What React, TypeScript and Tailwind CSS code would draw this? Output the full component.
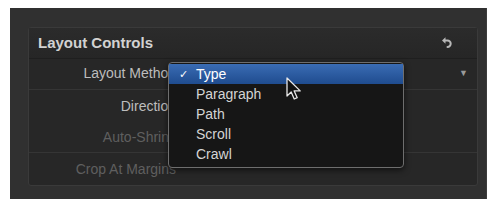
import React from 'react';

const menuItems = ['Type', 'Paragraph', 'Path', 'Scroll', 'Crawl'];

const rows = [
  { label: 'Layout Method', dim: false, line: true, arrow: true },
  { label: 'Direction', dim: false, line: false, arrow: false },
  { label: 'Auto-Shrink', dim: true, line: true, arrow: false },
  { label: 'Crop At Margins', dim: true, line: false, arrow: false },
];

const UndoIcon = () => (
  <svg width="12" height="14" viewBox="0 0 12 14" fill="none">
    <path d="M4 4.5h2.5a3.2 3.2 0 0 1 0 6.4" stroke="#b8b8b8" strokeWidth="2" strokeLinecap="round" />
    <path d="M1 4.5l3.5-3.2v6.4z" fill="#b8b8b8" />
  </svg>
);

const Cursor = () => (
  <svg width="16" height="24" viewBox="0 0 16 24">
    <path d="M1 1v18l4.2-4 3 7 3-1.3-3-6.8h6z" fill="#111" stroke="#e8e8e8" strokeWidth="1.3" strokeLinejoin="round" />
  </svg>
);

export default function App() {
  return (
    <div className="w-[496px] h-[204px] bg-white pt-2 pl-[10px] font-['Liberation_Sans',Arial,sans-serif]">
      <div className="relative w-[477px] h-[191px] bg-[#303030] border-r border-[#3c3c3c] pt-[19px] pl-[18px]">
        {/* panel */}
        <div className="w-[450px] h-[159px] bg-[#272727] border border-[#3a3a3a] rounded-[3px] flex flex-col">
          <div className="h-[31px] flex items-center justify-between pl-[9px] pr-[24px] border-b border-[#1f1f1f] bg-gradient-to-b from-[#2b2b2b] to-[#262626]">
            <span className="text-[15px] font-bold text-[#d2d2d2]">Layout Controls</span>
            <UndoIcon />
          </div>
          {rows.map((r) => (
            <div
              key={r.label}
              className={`h-[32px] flex items-center ${r.line ? 'border-b border-[#353535]' : ''}`}
            >
              <span
                className={`w-[147px] text-right text-[14px] ${r.dim ? 'text-[#5f5f5f]' : 'text-[#bdbdbd]'}`}
              >
                {r.label}
              </span>
              <div className="flex-1 flex justify-end pr-[9px]">
                {r.arrow && <span className="text-[9px] text-[#9a9a9a]">▼</span>}
              </div>
            </div>
          ))}
        </div>

        {/* popup menu */}
        <div className="absolute left-[158px] top-[54px] w-[236px] h-[106px] bg-[#161616] border border-[#6e6e6e] rounded-[4px] pt-[1px] shadow-[0_2px_6px_rgba(0,0,0,0.6)]">
          {menuItems.map((item, i) => (
            <div
              key={item}
              className={`h-[20px] flex items-center text-[14px] ${
                i === 0 ? 'bg-gradient-to-b from-[#3a6cb4] to-[#1f4c8f] text-white' : 'text-[#d4d4d4]'
              }`}
            >
              <span className="w-[27px] pl-[10px] text-[11px]">{i === 0 ? '✓' : ''}</span>
              <span>{item}</span>
            </div>
          ))}
        </div>

        <div className="absolute left-[276px] top-[69px]">
          <Cursor />
        </div>
      </div>
    </div>
  );
}
